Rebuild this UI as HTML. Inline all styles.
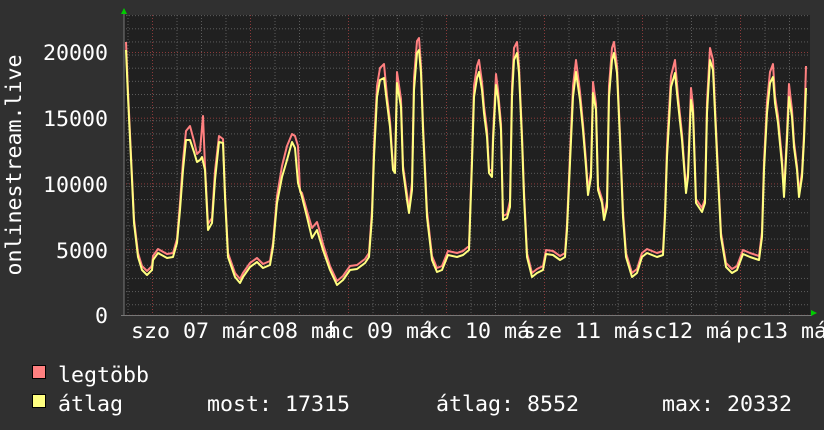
<!DOCTYPE html>
<html><head><meta charset="utf-8"><style>
html,body{margin:0;padding:0;background:#303030;}
svg{display:block}
text{font-family:"DejaVu Sans Mono","Liberation Mono",monospace;font-size:21.6px;fill:#ffffff;}
</style></head><body>
<svg width="824" height="430" viewBox="0 0 824 430" xmlns="http://www.w3.org/2000/svg">
<defs>
<pattern id="vg" patternUnits="userSpaceOnUse" x="127.5" y="0" width="24.5" height="3">
<rect x="0" y="0" width="1" height="1" fill="#5c5c5c"/></pattern>
<pattern id="hg" patternUnits="userSpaceOnUse" x="0" y="2" width="3" height="13.14">
<rect x="0" y="0" width="1" height="1" fill="#5c5c5c"/></pattern>
<pattern id="vr" patternUnits="userSpaceOnUse" x="152" y="0" width="98" height="3">
<rect x="0" y="0" width="1" height="1" fill="#8a3a3a"/></pattern>
<pattern id="hr" patternUnits="userSpaceOnUse" x="0" y="52" width="3" height="65.7">
<rect x="0" y="0" width="1" height="1" fill="#8a3a3a"/></pattern>
</defs>
<rect width="824" height="430" fill="#303030"/>
<rect x="124" y="15" width="686" height="300" fill="#202020"/>
<rect x="125" y="15" width="685" height="300" fill="url(#vg)"/>
<rect x="125" y="15" width="685" height="300" fill="url(#hg)"/>
<rect x="125" y="15" width="685" height="300" fill="url(#vr)"/>
<rect x="125" y="15" width="685" height="300" fill="url(#hr)"/>
<line x1="124" y1="12" x2="124" y2="316" stroke="#777" stroke-width="1"/>
<line x1="121" y1="315.5" x2="812" y2="315.5" stroke="#777" stroke-width="1"/>
<polygon points="121,14 127,14 124,8" fill="#00cc00"/>
<polygon points="811,310 811,316 817,313" fill="#00cc00"/>
<g fill="none" stroke-width="2" stroke-linejoin="round">
<polyline stroke="#ff8080" transform="translate(0,-4)" points="126,46 128,95 132,180 134,223 138,257 142,270 147,275 152,270 153,260 158,253 167,258 173,257 177,243 180,207 183,165 186,135 190,130 194,145 197,158 200,155 203,120 205,170 208,228 212,222 215,175 219,140 223,143 225,197 228,257 235,277 240,283 243,277 250,267 257,262 263,268 270,265 273,247 277,200 282,170 287,150 292,138 295,140 298,150 300,195 302,197 307,215 312,232 317,226 320,236 323,248 330,270 337,285 343,280 350,270 357,269 365,263 369,257 372,214 374,150 377,90 380,72 384,68 387,100 390,125 393,170 395,173 397,76 401,103 403,170 407,198 409,213 412,186 414,82 417,45 419,42 421,70 423,128 427,215 432,260 437,272 442,270 448,255 457,257 463,255 469,250 472,160 474,90 477,70 479,64 482,86 484,110 487,134 489,173 492,176 493,140 496,78 498,94 501,128 503,220 507,218 510,205 512,90 514,52 517,46 519,70 522,138 524,195 527,257 532,277 537,273 543,270 546,254 553,255 560,260 565,257 567,228 570,158 573,90 576,64 580,96 583,128 586,165 588,195 591,175 593,86 596,108 598,190 602,203 604,220 607,205 609,90 612,52 614,46 617,70 620,138 623,215 626,257 632,277 637,273 642,257 647,253 657,257 663,255 665,215 667,150 671,80 675,64 678,100 682,138 686,193 688,176 691,92 693,110 696,203 702,212 705,203 707,106 710,52 713,64 715,110 718,175 721,237 726,267 732,273 737,270 743,254 750,257 759,260 762,236 764,166 767,106 770,76 773,68 775,100 778,120 782,163 784,197 787,136 789,88 792,114 794,146 797,170 799,197 802,176 804,138 806,70"/>
<polyline stroke="#ffff80" points="126,50 128,97 132,180 134,223 138,257 142,270 147,275 152,270 153,260 158,253 167,258 173,257 177,243 180,210 183,170 186,140 190,140 194,152 197,162 200,160 202,157 205,170 208,230 212,223 215,180 219,142 223,143 225,197 228,257 235,277 240,283 243,277 250,267 257,262 263,268 270,265 273,247 277,203 282,177 287,160 292,142 295,148 298,183 302,197 307,217 312,238 317,230 320,240 323,250 330,270 337,285 343,280 350,270 357,269 365,263 369,257 372,217 374,157 377,97 380,80 384,78 387,103 390,127 393,170 395,173 397,83 401,107 403,170 407,200 409,213 412,190 414,90 417,53 419,50 421,73 423,130 427,217 432,260 437,272 442,270 448,255 457,257 463,255 469,250 472,163 474,97 477,78 479,72 482,90 484,113 487,137 489,173 492,177 493,143 496,85 498,97 501,130 503,220 507,218 510,207 512,97 514,60 517,53 519,73 522,140 524,197 527,257 532,277 537,273 543,270 546,254 553,255 560,260 565,257 567,230 570,163 573,97 576,72 580,100 583,130 586,167 588,195 591,177 593,93 596,110 598,190 602,203 604,220 607,207 609,97 612,60 614,53 617,73 620,140 623,217 626,257 632,277 637,273 642,257 647,253 657,257 663,255 665,217 667,157 671,87 675,73 678,103 682,140 686,193 688,177 691,100 693,113 696,203 702,212 705,203 707,113 710,60 713,70 715,113 718,177 721,237 726,267 732,273 737,270 743,254 750,257 759,260 762,237 764,170 767,113 770,83 773,77 775,103 778,123 782,165 784,197 787,140 789,97 792,117 794,147 797,170 799,197 802,177 804,140 806,88"/>
</g>
<g text-anchor="end">
<text x="108" y="60">20000</text>
<text x="108" y="126">15000</text>
<text x="108" y="192">10000</text>
<text x="108" y="258">5000</text>
<text x="108" y="323">0</text>
</g>
<text transform="translate(21,165) rotate(-90)" text-anchor="middle">onlinestream.live</text>
<text x="131" y="338">szo 07 má</text>
<text x="246" y="338">rc08 má</text>
<text x="328" y="338">hc 09 má</text>
<text x="426" y="338">kc 10 má</text>
<text x="523" y="338">sze 11 má</text>
<text x="641" y="338">sc12 má</text>
<text x="736" y="338">pc13 má</text>
<rect x="32.5" y="365.5" width="13" height="13" fill="#ff8080" stroke="#000" stroke-width="1"/>
<text x="58" y="382">legtöbb</text>
<rect x="32.5" y="394.5" width="13" height="13" fill="#ffff80" stroke="#000" stroke-width="1"/>
<text x="58" y="411">átlag</text>
<text x="207" y="411">most: 17315</text>
<text x="436" y="411">átlag: 8552</text>
<text x="662" y="411">max: 20332</text>
</svg>
</body></html>
